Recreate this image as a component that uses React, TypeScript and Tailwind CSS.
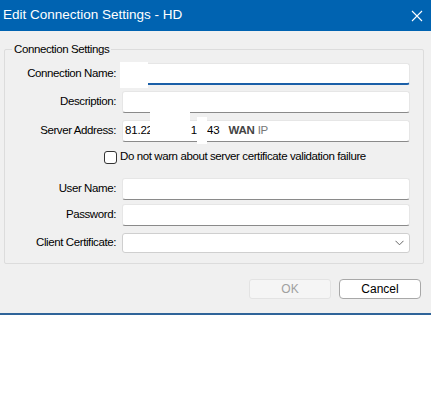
import React from 'react';

const font = { fontFamily: '"Liberation Sans", Arial, sans-serif' };

function Field({ active = false }: { active?: boolean }) {
  return (
    <div
      className={`h-[22px] w-[288px] bg-white border border-[#e6e6e6] rounded-[3px] ${
        active ? 'border-b-2 border-b-[#1a5fa8]' : 'border-b-[#8a8a8a]'
      }`}
    />
  );
}

function Row({ label, children, className = '' }: { label: string; children: React.ReactNode; className?: string }) {
  return (
    <div className={`flex items-center ${className}`}>
      <div className="w-[117px] pr-[6px] text-right text-[11.5px] tracking-[-0.4px] text-black">{label}</div>
      <div>{children}</div>
    </div>
  );
}

export default function App() {
  return (
    <div className="w-[431px] h-[411px] bg-white text-[11.5px]" style={font}>
      {/* Title bar */}
      <div className="h-[31px] bg-[#0063b1] flex items-center justify-between pl-[3px] pr-[7px]">
        <span className="text-white text-[13.5px]">Edit Connection Settings - HD</span>
        <svg width="12" height="12" viewBox="0 0 12 12" className="mr-[1px]">
          <path d="M1 1L11 11M11 1L1 11" stroke="white" strokeWidth="1.1" />
        </svg>
      </div>

      {/* Body */}
      <div className="h-[282px] bg-[#f0f0f0] pt-[18px]">
        <div className="relative ml-[4px] w-[420px] h-[215px] border border-[#dcdcdc] rounded-[2px] pt-[13px]">
          <span className="absolute left-[7px] -top-[9px] px-[2px] bg-[#f0f0f0] text-[11.5px] tracking-[-0.4px] text-black">
            Connection Settings
          </span>

          <Row label="Connection Name:">
            <div className="relative">
              <Field active />
              <div className="absolute -left-[2px] -top-[1px] w-[28px] h-[26px] bg-white" />
            </div>
          </Row>

          <Row label="Description:" className="mt-[6px]">
            <Field />
          </Row>

          <Row label="Server Address:" className="mt-[7px]">
            <div className="relative">
              <div className="h-[22px] w-[288px] bg-white border border-[#e6e6e6] border-b-[#8a8a8a] rounded-[3px] flex items-center pl-[2px] text-black tracking-[-0.2px]">
                <span>81.22</span>
                <span className="ml-[38px]">1</span>
                <span className="ml-[10px]">43</span>
                <span className="ml-[9px] font-bold text-[#444]">WAN</span>
                <span className="ml-[3px] text-[#777]">IP</span>
              </div>
              <div className="absolute left-[28px] -top-[10px] w-[40px] h-[31px] bg-white" />
              <div className="absolute left-[75px] -top-[3px] w-[10px] h-[27px] bg-white" />
            </div>
          </Row>

          <div className="flex items-center mt-[7px] ml-[99px] h-[16px]">
            <div className="w-[13px] h-[13px] border border-[#333] rounded-[3px] bg-white" />
            <span className="ml-[3px] tracking-[-0.4px] text-black">
              Do not warn about server certificate validation failure
            </span>
          </div>

          <Row label="User Name:" className="mt-[13px]">
            <Field />
          </Row>

          <Row label="Password:" className="mt-[4px]">
            <Field />
          </Row>

          <Row label="Client Certificate:" className="mt-[7px]">
            <div className="h-[20px] w-[288px] bg-white border border-[#cfcfcf] rounded-[3px] flex items-center justify-end pr-[5px]">
              <svg width="9" height="6" viewBox="0 0 9 6">
                <path d="M0.5 0.8L4.5 4.8L8.5 0.8" stroke="#666" strokeWidth="1" fill="none" />
              </svg>
            </div>
          </Row>
        </div>

        <div className="flex justify-end gap-[8px] pr-[10px] mt-[15px]">
          <button className="w-[82px] h-[20px] border border-[#e3e3e3] rounded-[3px] bg-[#f5f5f5] text-[#a0a0a0] text-[12px]">
            OK
          </button>
          <button className="w-[82px] h-[20px] border border-[#a8a8a8] rounded-[4px] bg-white text-black text-[12px]">
            Cancel
          </button>
        </div>
      </div>
      <div className="h-[2px] bg-[#2f6499]" />
    </div>
  );
}
